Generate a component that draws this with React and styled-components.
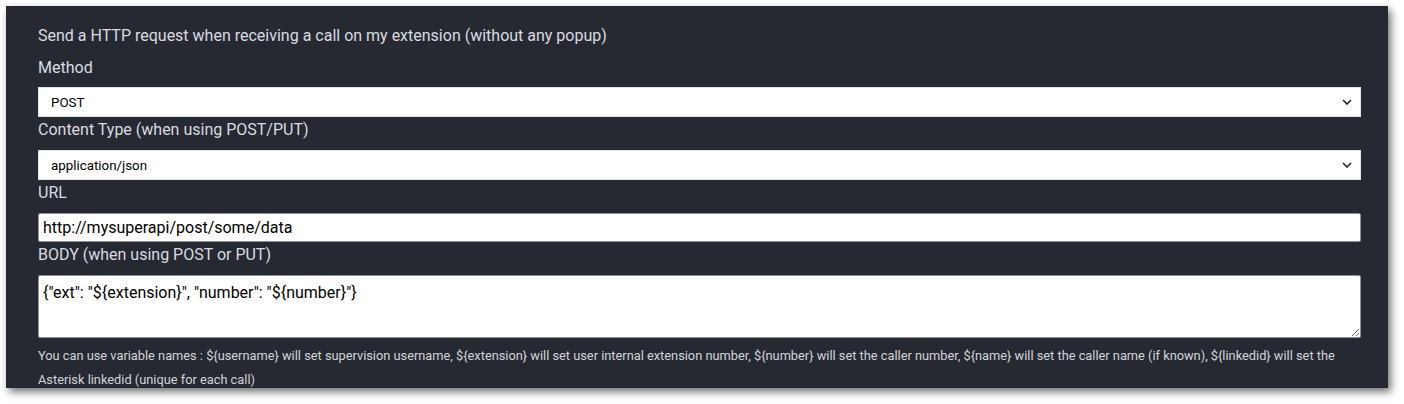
import React from 'react'
import styled, { createGlobalStyle } from 'styled-components'

const Global = createGlobalStyle`
  html, body { margin: 0; padding: 0; background: #ffffff; }
  body { font-family: Roboto, "Liberation Sans", Arial, sans-serif; }
`

const chevron =
  "url(\"data:image/svg+xml;utf8,<svg xmlns='http://www.w3.org/2000/svg' width='10' height='6' viewBox='0 0 10 6'><path d='M1 1l4 4 4-4' fill='none' stroke='%23222' stroke-width='1.6'/></svg>\")"

const Page = styled.div`
  padding: 6px 16px 16px 6px;
`

const Panel = styled.div`
  box-sizing: border-box;
  width: 1382px;
  height: 382px;
  overflow: hidden;
  background: #262932;
  color: #d9dbe0;
  padding: 20px 27px 0 32px;
  box-shadow: 3px 4px 8px rgba(0, 0, 0, 0.55);
`

const Title = styled.div`
  font-size: 16px;
  line-height: 20px;
  margin-bottom: 12px;
`

const Field = styled.div`
  display: flex;
  flex-direction: column;
  margin-bottom: 3px;
`

const Label = styled.label`
  font-size: 16px;
  line-height: 20px;
  margin-bottom: ${p => (p.$first ? '9px' : '10px')};
`

const Select = styled.select`
  box-sizing: border-box;
  width: 100%;
  height: 30px;
  font-family: Roboto, "Liberation Sans", Arial, sans-serif;
  font-size: 13.33px;
  color: #000;
  appearance: none;
  background: #fff ${chevron} no-repeat right 8px center;
  border: 1px solid #e3e3e3;
  border-radius: 0;
  padding: 0 24px 0 12px;
  outline: none;
`

const Input = styled.input`
  box-sizing: border-box;
  width: 100%;
  height: 29px;
  font-family: Roboto, "Liberation Sans", Arial, sans-serif;
  font-size: 16px;
  color: #000;
  background: #fff;
  border: 1px solid #8e9096;
  border-radius: 2px;
  padding: 0 4px;
  outline: none;
`

const TextArea = styled.textarea`
  box-sizing: border-box;
  width: 100%;
  height: 63px;
  font-family: Roboto, "Liberation Sans", Arial, sans-serif;
  font-size: 16px;
  line-height: 20px;
  color: #000;
  background: #fff;
  border: 1px solid #8e9096;
  border-radius: 2px;
  padding: 7px 4px;
  outline: none;
  resize: vertical;
  display: block;
`

const Help = styled.div`
  font-size: 12.8px;
  line-height: 24px;
  margin-top: 6px;
  color: #d2d4d9;
`

export default function App() {
  return (
    <>
      <Global />
      <Page>
        <Panel>
          <Title>Send a HTTP request when receiving a call on my extension (without any popup)</Title>
          <Field>
            <Label $first>Method</Label>
            <Select defaultValue="POST">
              <option>GET</option>
              <option>POST</option>
              <option>PUT</option>
            </Select>
          </Field>
          <Field>
            <Label>Content Type (when using POST/PUT)</Label>
            <Select defaultValue="application/json">
              <option>application/json</option>
              <option>application/x-www-form-urlencoded</option>
            </Select>
          </Field>
          <Field>
            <Label>URL</Label>
            <Input type="text" defaultValue="http://mysuperapi/post/some/data" />
          </Field>
          <Field>
            <Label>BODY (when using POST or PUT)</Label>
            <TextArea defaultValue={'{"ext": "${extension}", "number": "${number}"}'} />
          </Field>
          <Help>
            You can use variable names : {'${username}'} will set supervision username, {'${extension}'} will set user internal extension number, {'${number}'} will set the caller number, {'${name}'} will set the caller name (if known), {'${linkedid}'} will set the Asterisk linkedid (unique for each call)
          </Help>
        </Panel>
      </Page>
    </>
  )
}
